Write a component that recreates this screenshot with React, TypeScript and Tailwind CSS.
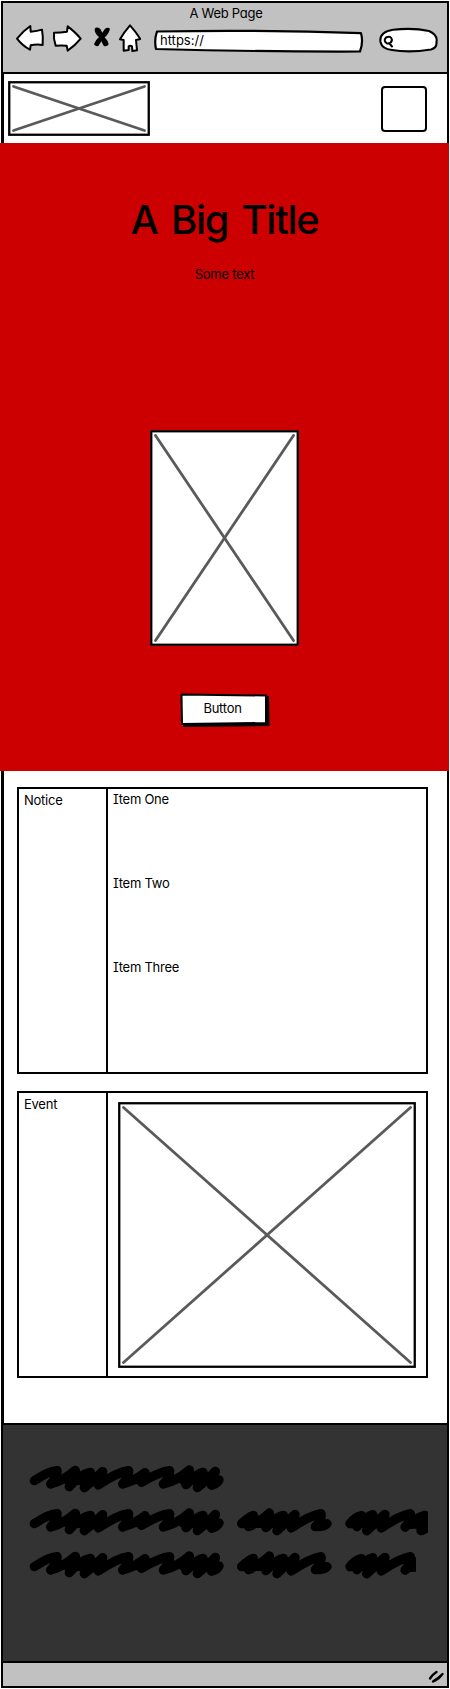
import React from "react";

type BoxProps = { className: string; width: number; height: number; inset?: number };

function ImagePlaceholder({ className, width, height, inset = 5.5 }: BoxProps) {
  return (
    <div className={`bg-white ${className}`}>
      <svg className="block" width={width} height={height} fill="none" stroke="black">
        <rect x="1.25" y="1.25" width={width - 2.5} height={height - 2.5} strokeWidth="2.3" />
        <g stroke="#5a5a5a" strokeWidth="2.8" strokeLinecap="round">
          <path d={`M${inset} ${inset}L${width - inset} ${height - inset}`} />
          <path d={`M${width - inset} ${inset}L${inset} ${height - inset}`} />
        </g>
      </svg>
    </div>
  );
}

const WORDS = {
  long: "M102 340Q150 309 170 310Q172 326 151 350Q190 340 225 309L207 358Q240 320 270 315L252 361Q290 330 307 313L294 353Q350 315 385 310Q386 330 367 350Q405 340 434 316L424 345Q480 312 508 310Q508 330 489 350Q535 338 567 308L557 352Q590 318 608 315L591 361Q630 330 645 312L634 354Q650 350 656 338M205 342L310 332M375 340L440 334M550 340L640 336M240 334L300 330M580 330L640 330",
  medium: "M65 340Q85 320 100 315L86 349Q125 330 148 308L138 352Q170 318 190 315L171 361Q205 330 225 312L214 353Q270 315 303 310Q306 330 286 349Q315 350 321 340M70 340L220 336M140 332L215 328",
  short: "M390 340Q405 320 425 316L411 349Q440 318 458 313L440 361Q475 330 495 312L484 353Q540 315 571 310Q573 330 555 350Q590 322 615 315L603 361Q630 350 640 330M395 340L490 336M430 330L485 328M570 342L615 340",
};

function Scribble({ d, box, className }: { d: string; box: string; className: string }) {
  return (
    <svg className={`block h-[30px] ${className}`} viewBox={box} preserveAspectRatio="xMinYMin slice" fill="none" stroke="black" strokeWidth="28" strokeLinecap="round" strokeLinejoin="round">
      <path d={d} />
    </svg>
  );
}

function Toolbar() {
  return (
    <div className="h-[71px] shrink-0 border-b-[2.5px] border-black bg-[#c1c1c1]">
      <div className="pl-[2px] text-center text-[13px] leading-[20px]">A Web Page</div>
      <div className="flex items-start pl-[12px]">
        <svg className="h-[30px] w-[126px]" viewBox="45 65 378 90" fill="white" stroke="black" strokeWidth="6" strokeLinejoin="round" strokeLinecap="round">
          <path d="M51 112Q68 90 91 74L92 91Q112 90 126 85Q130 108 128 131Q110 128 92 132L90 145Q68 134 51 112Z" />
          <path d="M162 94Q182 94 201 91L203 75Q228 94 242 112Q226 132 203 148L200 133Q184 132 167 133Q160 112 162 94Z" />
          <path stroke="none" fill="black" d="M284 82Q290 75 301 83L307 94L315 82Q324 77 330 82Q327 97 314 108Q324 118 326 129Q320 138 311 133L304 120L295 134Q285 136 282 129Q287 115 297 107Q283 96 284 82Z" />
          <path d="M390 72Q408 92 421 113L408 116L411 147L397 149L396 135Q390 131 386 135L386 146L371 148L371 116L360 114Q371 94 390 72Z" />
        </svg>
        <div className="relative ml-[12px] mt-[6px] h-[24px] w-[212px]">
          <svg className="absolute inset-0" width="212" height="24" viewBox="0 0 212 24" fill="white" stroke="black" strokeWidth="2.2" strokeLinejoin="round">
            <path d="M4 2.5Q110 .6 208 4.2Q210.500 13 207 22.500Q105 22.800 3 20Q1 11 4 2.500Z" />
          </svg>
          <span className="relative block pl-[7px] pt-[2px] text-[13px] leading-[18px] tracking-[0px]">https://</span>
        </div>
        <svg className="ml-[12px] mt-[4px]" width="64" height="28" viewBox="0 0 64 28" fill="white" stroke="black" strokeWidth="2.1" strokeLinejoin="round" strokeLinecap="round">
          <path d="M16 2.800Q36 .500 52 4Q61 8 59.500 15Q60 21 54 22.500Q32 26 15 23Q5 22 3.500 15Q2 5 16 2.800Z" />
          <path d="M9 10.500Q14 8 15 13Q14 17 10 16.500Q6 14 9 10.500ZM12.500 16.500L15 19.500" strokeWidth="2" />
        </svg>
      </div>
    </div>
  );
}

function Panel({ label, children }: { label: string; children: React.ReactNode }) {
  return (
    <section className="flex h-[287px] w-[411px] border-2 border-black">
      <div className="w-[87px] pl-[5px] pt-[1px] text-[13px] leading-[20px]">{label}</div>
      <div className="flex-1 border-l-[2.5px] border-black">{children}</div>
    </section>
  );
}

export default function App() {
  return (
    <div className="h-[1689px] w-[450px] bg-white px-[1px] pt-[1px] font-['Inter','Liberation_Sans',sans-serif] tracking-[-0.25px] text-black [font-feature-settings:'cv08','cv11']">
      <div className="flex h-[1687px] w-[448px] flex-col border-2 border-black">
        <Toolbar />

        <header className="flex h-[69px] shrink-0 justify-between border-l border-black pl-[4px] pr-[20px]">
          <ImagePlaceholder className="mt-[7px] h-[55px] w-[142px]" width={142} height={55} />
          <div className="mt-[12px] h-[46px] w-[46px] rounded-[4px] border-2 border-black" />
        </header>

        <main className="-ml-[3px] -mr-[2px] flex h-[628px] shrink-0 flex-col items-center bg-[#cc0000]">
          <h1 className="mt-[53px] whitespace-nowrap text-[40px] font-medium leading-[48px] tracking-[-1.3px] [word-spacing:4px]">A Big Title</h1>
          <p className="mt-[20px] text-[13px] leading-[20px]">Some text</p>
          <ImagePlaceholder className="mt-[146px] h-[216px] w-[149px]" width={149} height={216} />
          <button className="mt-[45px] h-[33px] w-[90px]">
            <svg className="absolute" width="92" height="35" viewBox="0 0 92 35" strokeLinejoin="round">
              <path d="M3 2L89 3L89.500 33L3.500 34Z" fill="black" />
              <path d="M1.500 1.500L86 2.500V30L2 31Z" fill="white" stroke="black" strokeWidth="2" />
            </svg>
            <span className="relative block w-[86px] text-[13px] leading-[30px]">Button</span>
          </button>
        </main>

        <div className="flex h-[652px] shrink-0 flex-col gap-[17px] border-l border-black pl-[13px] pt-[16px]">
          <Panel label="Notice">
            <div className="flex flex-col gap-[64px] pl-[5px] text-[13px] leading-[20px]">
              <p>Item One</p>
              <p>Item Two</p>
              <p>Item Three</p>
            </div>
          </Panel>
          <Panel label="Event">
            <ImagePlaceholder className="ml-[10px] mt-[9px] h-[266px] w-[298px]" width={298} height={266} />
          </Panel>
        </div>

        <footer className="flex h-[240px] shrink-0 flex-col gap-[13px] border-y-[2.5px] border-black bg-[#333333] pl-[26px] pt-[39px]">
          <div className="flex">
            <Scribble className="w-[195px]" d={WORDS.long} box="86 290 585 90" />
          </div>
          <div className="flex">
            <Scribble className="w-[195px]" d={WORDS.long} box="86 290 585 90" />
            <Scribble className="ml-[12px] w-[97px]" d={WORDS.medium} box="48 290 291 90" />
            <Scribble className="ml-[12px] w-[83px]" d={WORDS.short} box="375 290 249 90" />
          </div>
          <div className="flex">
            <Scribble className="w-[195px]" d={WORDS.long} box="86 290 585 90" />
            <Scribble className="ml-[12px] w-[97px]" d={WORDS.medium} box="48 290 291 90" />
            <Scribble className="ml-[12px] w-[71px]" d={WORDS.short} box="375 290 213 90" />
          </div>
        </footer>

        <div className="flex flex-1 justify-end bg-[#c1c1c1]">
          <svg className="mr-[2px] mt-[5px]" width="18" height="16" viewBox="0 0 18 16" fill="none" stroke="black" strokeWidth="2.4" strokeLinecap="round">
            <path d="M3 10.500Q5.500 6.500 9.500 4M6 13.500Q11 10.500 15.500 6M7.500 12.800Q12 11 15 6.500" />
          </svg>
        </div>
      </div>
    </div>
  );
}
